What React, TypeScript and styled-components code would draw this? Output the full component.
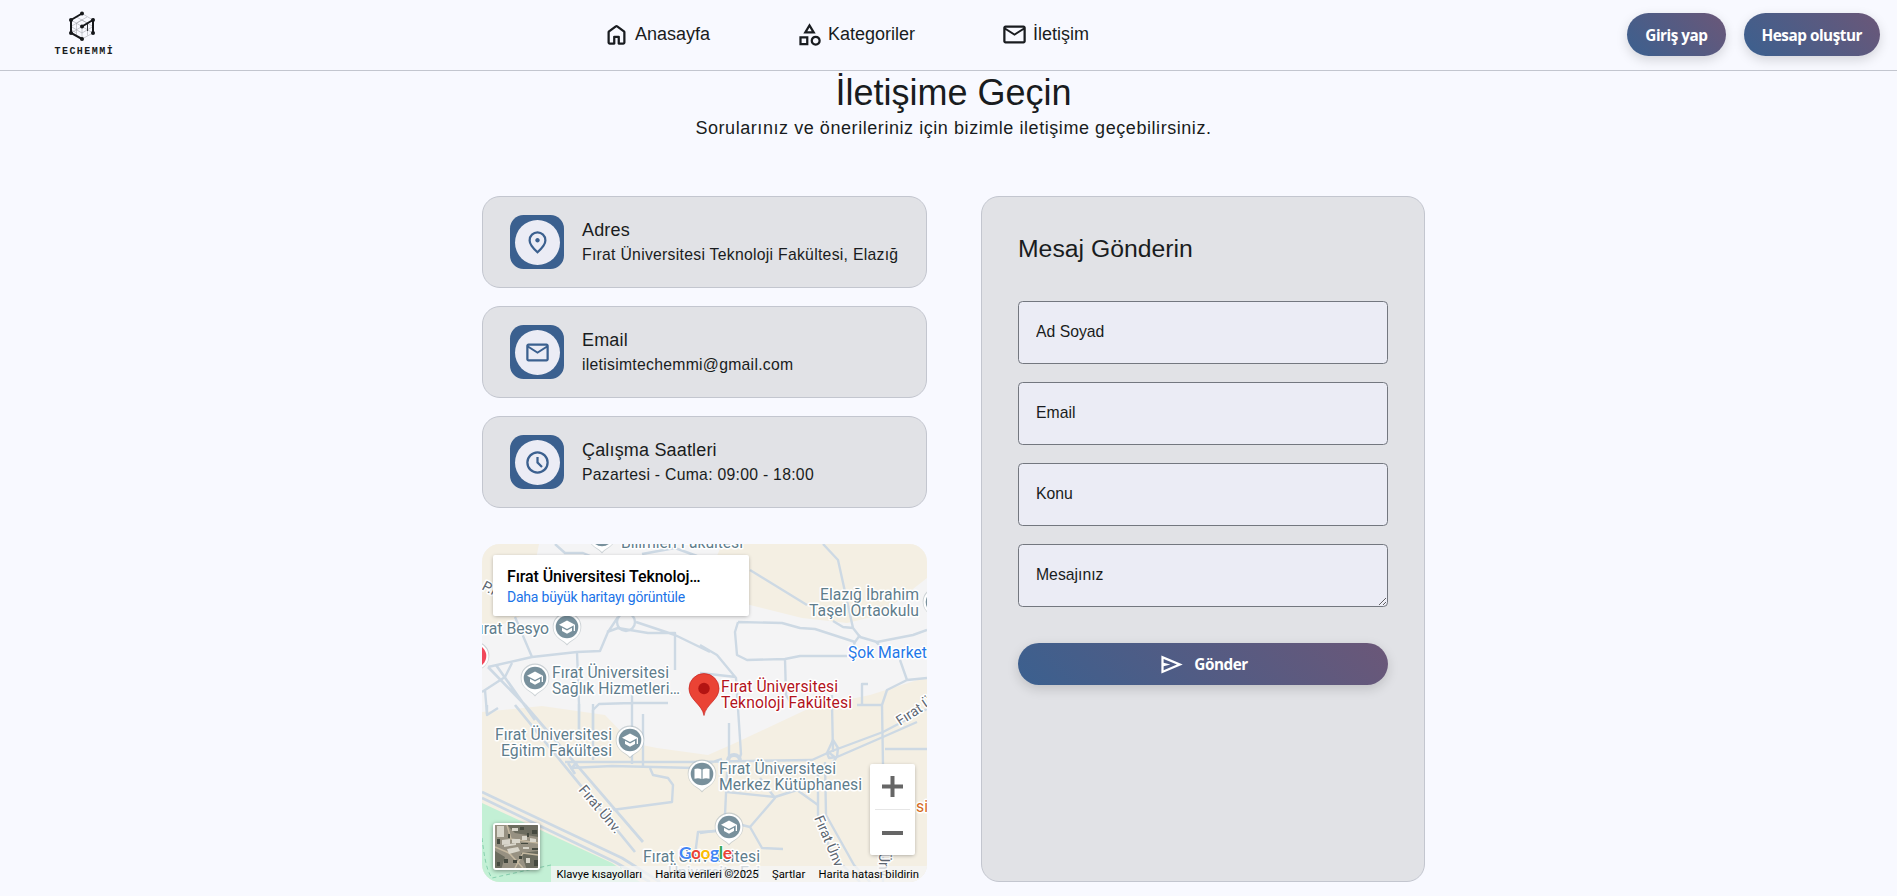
import React from 'react';
import styled, { createGlobalStyle } from 'styled-components';

const color = {
  primary: '#3b608f',
  tertiary: '#6b5778',
  surface: '#f8f9ff',
  card: '#e1e2e6',
  field: '#ebecf5',
  outline: '#73777f',
  outlineVariant: '#c3c6cf',
  text: '#191c20',
};

const GlobalStyle = createGlobalStyle`
  *, *::before, *::after { box-sizing: border-box; }
  html, body { margin: 0; background: ${color.surface}; overflow: hidden; }
  body {
    color: ${color.text};
    font-family: Arial, "Liberation Sans", sans-serif;
    font-size: 18px;
  }
`;

/* ---------- icons ---------- */

const paths = {
  home: 'M240-200h120v-200q0-17 11.5-28.5T400-440h160q17 0 28.5 11.5T600-400v200h120v-360L480-740 240-560v360Zm-80 0v-360q0-19 8.5-36t23.5-28l240-180q21-16 48-16t48 16l240 180q15 11 23.5 28t8.5 36v360q0 33-23.5 56.5T720-120H560q-17 0-28.5-11.5T520-160v-200h-80v200q0 17-11.5 28.5T400-120H240q-33 0-56.5-23.5T160-200Z',
  category: 'm260-520 220-360 220 360H260ZM700-80q-75 0-127.5-52.5T520-260q0-75 52.5-127.5T700-440q75 0 127.5 52.5T880-260q0 75-52.5 127.5T700-80Zm-580-20v-320h320v320H120Zm580-60q42 0 71-29t29-71q0-42-29-71t-71-29q-42 0-71 29t-29 71q0 42 29 71t71 29Zm-500-20h160v-160H200v160Zm202-420h156l-78-126-78 126Z',
  mail: 'M160-160q-33 0-56.5-23.5T80-240v-480q0-33 23.5-56.5T160-800h640q33 0 56.5 23.5T880-720v480q0 33-23.5 56.5T800-160H160Zm320-280L160-640v400h640v-400L480-440Zm0-80 320-200H160l320 200Z',
  location: 'M480-480q33 0 56.5-23.5T560-560q0-33-23.5-56.5T480-640q-33 0-56.5 23.5T400-560q0 33 23.5 56.5T480-480Zm0 294q122-112 181-203.5T720-552q0-109-69.5-178.5T480-800q-101 0-170.5 69.5T240-552q0 71 59 162.5T480-186Zm0 106Q319-217 239.5-334.5T160-552q0-150 96.5-239T480-880q127 0 223.5 89T800-552q0 100-79.5 217.5T480-80Z',
  schedule: 'm612-292 56-56-148-148v-184h-80v216l172 172ZM480-80q-83 0-156-31.5T197-197q-54-54-85.5-127T80-480q0-83 31.5-156T197-763q54-54 127-85.5T480-880q83 0 156 31.5T763-763q54 54 85.5 127T880-480q0 83-31.5 156T763-197q-54 54-127 85.5T480-80Zm0-80q133 0 226.5-93.5T800-480q0-133-93.5-226.5T480-800q-133 0-226.5 93.5T160-480q0 133 93.5 226.5T480-160Z',
  send: 'M120-160v-640l760 320-760 320Zm80-120 474-200-474-200v140l240 60-240 60v140Z',
};

const IconSvg = styled.svg`
  width: 27px;
  height: 27px;
  flex: none;
  display: block;
  fill: currentColor;
`;

const Icon = ({ name }: { name: keyof typeof paths }) => (
  <IconSvg viewBox="0 -960 960 960" aria-hidden="true">
    <path d={paths[name]} />
  </IconSvg>
);

/* ---------- header ---------- */

const Header = styled.header`
  height: 71px;
  display: grid;
  grid-template-columns: 603px 1fr auto;
  align-items: center;
  padding: 0 17px 1px 0;
  border-bottom: 1px solid ${color.outlineVariant};
`;

const Brand = styled.a`
  display: flex;
  flex-direction: column;
  align-items: flex-start;
  gap: 5px;
  width: 62px;
  margin-left: 54.5px;
`;

const BrandMark = styled.svg`
  width: 30px;
  height: 30px;
  margin-left: 12.5px;
  display: block;
`;

const BrandName = styled.span`
  font: bold 10px/12px "Liberation Mono", monospace;
  letter-spacing: 1.45px;
  white-space: nowrap;
`;

const Nav = styled.nav`
  display: flex;
  gap: 86px;
`;

const NavLink = styled.a`
  display: flex;
  align-items: center;
  gap: 5px;
  line-height: 27px;

  span { margin-top: -1px; }
`;

const Actions = styled.div`
  display: flex;
  gap: 18px;
`;

const Button = styled.button<{ $wide?: boolean }>`
  display: flex;
  align-items: center;
  justify-content: center;
  gap: 9px;
  width: ${(p) => (p.$wide ? '100%' : 'auto')};
  height: ${(p) => (p.$wide ? 42 : 43)}px;
  padding: 0 18px;
  border: 0;
  border-radius: 22px;
  color: #fff;
  background: linear-gradient(45deg, ${color.primary}, ${color.tertiary});
  box-shadow: 0 4px 12px rgba(0, 0, 0, 0.15);
  font: 700 15.3px/22px "Open Sans", "Noto Sans", sans-serif;
  letter-spacing: -0.48px;
  white-space: nowrap;
`;

function Logo() {
  const nodes = [[15, 2.5], [4, 9], [4, 22], [15, 28], [26, 22], [26, 9], [15, 15.5]];
  return (
    <Brand>
      <BrandMark viewBox="0 0 30 30">
        <g stroke="#9a9ca3" strokeWidth="0.5" fill="none">
          <path d="M15 2.5 26 9M4 9l11 6.5v12.5M4 22l11-6.5 11 6.5-11 6M4 15.5 15 9l11 6.5M9.5 6 21 12.5M9.5 12v12.5M20.5 12v12.5M4 15.5l11 6.5 11-6.5M9.500 12 20 6M4 18.500 9.500 22" />
        </g>
        <path d="M15 2.500 4 9V22L15 28M26 22V9L15 15.500" stroke="#15171a" strokeWidth="2" fill="none" />
        <path d="M20.500 13v7" stroke="#33353a" strokeWidth="1" />
        {nodes.map(([x, y]) => (
          <circle key={`${x}-${y}`} cx={x} cy={y} r="2" fill="#15171a" />
        ))}
      </BrandMark>
      <BrandName>TECHEMMİ</BrandName>
    </Brand>
  );
}

/* ---------- page ---------- */

const Main = styled.main`
  width: 943px;
  margin-left: 482px;
`;

const Title = styled.h1`
  margin: 0;
  font-weight: 400;
  font-size: 36px;
  line-height: 44px;
  text-align: center;
`;

const Lead = styled.p`
  margin: 0 0 54px;
  font-size: 18px;
  line-height: 27px;
  letter-spacing: 0.56px;
  text-align: center;
`;

const Columns = styled.div`
  display: grid;
  grid-template-columns: 1fr 1fr;
  gap: 54px;
  height: 686px;
`;

const Info = styled.section`
  display: flex;
  flex-direction: column;
  gap: 18px;
`;

const InfoCard = styled.article`
  display: flex;
  align-items: center;
  gap: 18px;
  height: 92px;
  padding: 0 27px;
  background: ${color.card};
  border: 1px solid ${color.outlineVariant};
  border-radius: 18px;
`;

const IconTile = styled.div`
  flex: none;
  width: 54px;
  height: 54px;
  padding: 4.5px;
  border-radius: 13.5px;
  background: ${color.primary};
`;

const IconDisc = styled.div`
  display: grid;
  place-items: center;
  width: 45px;
  height: 45px;
  border-radius: 50%;
  color: ${color.primary};
  background: ${color.field};
`;

const InfoText = styled.div`
  white-space: nowrap;
`;

const InfoTitle = styled.h2`
  margin: 0;
  font-weight: 400;
  font-size: 18px;
  line-height: 27px;
  letter-spacing: 0.17px;
`;

const InfoLine = styled.p`
  margin: 0;
  font-size: 15.75px;
  line-height: 22.5px;
  letter-spacing: 0.28px;
`;

const FormCard = styled.form`
  padding: 36px;
  background: ${color.card};
  border: 1px solid ${color.outlineVariant};
  border-radius: 18px;
`;

const FormTitle = styled.h2`
  margin: 0 0 36px;
  font-weight: 400;
  font-size: 24.75px;
  line-height: 32px;
`;

const Fields = styled.div`
  display: grid;
  gap: 18px;
  margin-bottom: 36px;
`;

const fieldStyle = `
  display: block;
  width: 100%;
  height: 63px;
  margin: 0;
  border: 1px solid ${color.outline};
  border-radius: 4.5px;
  background: ${color.field};
  outline: 0;
  font: 15.75px/18px Arial, "Liberation Sans", sans-serif;
  &::placeholder { color: ${color.text}; opacity: 1; }
`;

const Input = styled.input`
  ${fieldStyle}
  padding: 0 17px 1px;
`;

const TextArea = styled.textarea`
  ${fieldStyle}
  padding: 21px 17px;
  resize: vertical;
  overflow: hidden;
`;

/* ---------- map ---------- */

const MapFrame = styled.div`
  position: relative;
  height: 338px;
  margin-top: 18px;
  overflow: hidden;
  border-radius: 18px;
  background: #f4f4f5;
  font-family: Roboto, sans-serif;
`;

const MapSvg = styled.svg`
  display: block;
  width: 445px;
  height: 338px;
  font-family: Roboto, sans-serif;
`;

const PlaceCard = styled.div`
  position: absolute;
  top: 11px;
  left: 11px;
  width: 256px;
  height: 61px;
  padding: 10px 14px;
  border-radius: 2px;
  background: #fff;
  box-shadow: 0 1px 4px -1px rgba(0, 0, 0, 0.4);
  white-space: nowrap;
`;

const PlaceName = styled.div`
  color: #000;
  font-weight: 500;
  font-size: 16px;
  line-height: 23px;
  letter-spacing: -0.1px;
`;

const PlaceLink = styled.a`
  display: block;
  color: #1a73e8;
  font-size: 14px;
  line-height: 18px;
  letter-spacing: -0.22px;
`;

const ZoomBox = styled.div`
  position: absolute;
  top: 220px;
  left: 388px;
  width: 45px;
  height: 91px;
  padding: 0 5px;
  background: #fff;
  border-radius: 2px;
  box-shadow: 0 1px 4px -1px rgba(0, 0, 0, 0.4);
`;

const ZoomKey = styled.div`
  display: grid;
  place-items: center;
  height: 45px;
  & + & { border-top: 1px solid #e6e6e6; height: 46px; }
`;

const Thumb = styled.div`
  position: absolute;
  top: 279px;
  left: 11px;
  width: 47px;
  height: 47px;
  border: 2px solid #fff;
  border-radius: 3px;
  overflow: hidden;
  background: #77756a;
  box-shadow: 0 1px 4px rgba(0, 0, 0, 0.4);

  svg { display: block; }
`;

const Credits = styled.div`
  position: absolute;
  right: 0;
  bottom: 0;
  display: flex;
  width: 376px;
  height: 16px;
  padding: 0 8px 0 5.5px;
  justify-content: space-between;
  background: rgba(245, 245, 245, 0.75);
  color: #000;
  font-size: 11.25px;
  line-height: 17px;
  white-space: nowrap;
`;

type LabelProps = {
  x: number;
  y: number;
  w?: number;
  end?: boolean;
  rotate?: number;
  fill?: string;
  size?: number;
  children: string;
};

const Label = ({ x, y, w, end, rotate, fill = '#5f7d8c', size = 15.75, children }: LabelProps) => (
  <text
    x={x}
    y={y}
    fontSize={size}
    fill={fill}
    stroke="#fff"
    strokeWidth="3"
    strokeLinejoin="round"
    paintOrder="stroke"
    textAnchor={end ? 'end' : 'start'}
    textLength={w}
    transform={rotate ? `rotate(${rotate} ${x} ${y})` : undefined}
  >
    {children}
  </text>
);

const Marker = ({ x, y, kind = 'school' }: { x: number; y: number; kind?: 'school' | 'book' | 'red' | 'plain' }) => (
  <g transform={`translate(${x} ${y})`}>
    <path d="M0 18.500C-2.500 15-7.500 13-10.500 9.500A14.300 14.300 0 1 1 10.500 9.500C7.500 13 2.500 15 0 18.500Z" fill="#aab4ba" opacity="0.55" />
    <path d="M0 17C-2.500 14-7 12.500-10 9.200A13.500 13.500 0 1 1 10 9.200C7 12.500 2.500 14 0 17Z" fill="#fff" />
    <circle r="11.300" fill={kind === 'red' ? '#f1485b' : '#78909c'} />
    {kind === 'school' && (
      <g fill="#fff">
        <path d="M0-6.500-8-2.200 0 2 8-2.200Z" />
        <path d="M-5 .8V4L0 6.800 5 4V.8L0 3.500Z" />
        <path d="M6.700-2h1.300v6H6.700Z" />
      </g>
    )}
    {kind === 'book' && <path d="M-7.500-5C-5-6-2.500-5.500-.6-4.500V5C-2.500 4-5 4-7.500 4.800ZM7.500-5C5-6 2.500-5.500.6-4.500V5C2.500 4 5 4 7.500 4.800Z" fill="#fff" />}
  </g>
);

const roads = [
  'M73 0 83 9H101L113 14M160 10 193 4 215 12',
  'M33 73 50 113M6 123 50 113 95 108 118 107 126 88 136 73M95 108 97 160V186',
  'M125 88 136 84 166 89H193V126M154 78 193 91 228 108',
  'M30 119 23 133 3 146 0 148M3 146 5 170M111 186V166L117 160 150 159H186M150 151V220',
  'M5 161V171L16 164M111 160V216M161 170V223M97 160V186',
  'M83 218H208L330 216 350 207 401 188 445 165M88 224 130 222 213 224 240 215',
  'M168 224 171 231 186 234 191 241 190 258 130 266',
  'M341 0 356 16 371 84 378 93 395 98 431 91 445 86M268 26 325 61M351 77 361 83 371 84',
  'M256 78 300 79 318 84 333 85 373 98 378 91M256 78 253 88 255 111 265 116 303 115 318 112 365 112M303 115 304 151 310 161',
  'M218 101 235 111 254 134 259 210 257 216M218 129 254 133M247 179V216M373 98 370 105M394 98 400 104',
  'M418 116 425 136 445 134M425 136 405 146 400 161 401 221M400 161H375M380 160V140H386M350 151V161L351 208',
  'M346 208 354 214 350 220M351 196 345 209 347 214 355 213 356 204ZM355 213 401 193 435 178M403 205H445',
  'M336 220V271L350 311 378 338M343 218 344 271 372 321 388 338M401 221V338',
  'M245 228 243 271M218 289 238 286M260 281 268 283 280 304 301 305M268 283 293 254 278 234',
  'M245 248 293 253 315 246 336 261M237 287 216 288 213 311',
];

const sidewalks = ['M33 161 153 308M43 161 161 298', 'M6 123 43 161M14 121 53 176', 'M0 248 140 314 178 338M0 254 133 318 168 338', 'M86 219 93 230M95 218 89 225'];

function CampusMap() {
  return (
    <MapFrame>
      <MapSvg viewBox="0 0 445 338">
        <rect width="445" height="338" fill="#f4f4f5" />
        <g fill="#f4efe3">
          <path d="M0 0H57L43 70 0 90ZM240 0H445V34L398 71 365 79 320 74 268 61 218 52Z" />
          <path d="M0 168 60 162 123 171 150 199 175 204 226 211 251 200 330 163 388 151 445 133V338H0Z" />
        </g>
        <path d="M0 259 130 319 158 338H0Z" fill="#c3f0d5" />
        <path d="M0 294C2 310 4 326 10 334L69 321M138 321l3 9" fill="none" stroke="#86cfae" strokeWidth="1" strokeDasharray="4 3" />
        <g fill="none" stroke="#cdd9e4" strokeLinejoin="round">
          {roads.map((d) => <path key={d} d={d} strokeWidth="2.400" />)}
          {sidewalks.map((d) => <path key={d} d={d} strokeWidth="2.700" />)}
          <circle cx="144" cy="78" r="9" strokeWidth="2.400" />
          <path d="M246 217a6 6 0 0 1 12 0" strokeWidth="4" />
        </g>

        <Label x={139} y={4} w={122}>Bilimleri Fakültesi</Label>
        <Label x={67} y={90} end>Fırat Besyo</Label>
        <Label x={70} y={134} w={117}>Fırat Üniversitesi</Label>
        <Label x={70} y={150} w={128}>Sağlık Hizmetleri…</Label>
        <Label x={437} y={56} w={99} end>Elazığ İbrahim</Label>
        <Label x={437} y={72} w={110} end>Taşel Ortaokulu</Label>
        <Label x={366} y={114} w={79} fill="#1f78e8">Şok Market</Label>
        <Label x={130} y={196} w={117} end>Fırat Üniversitesi</Label>
        <Label x={130} y={212} w={111} end>Eğitim Fakültesi</Label>
        <Label x={237} y={230} w={117}>Fırat Üniversitesi</Label>
        <Label x={237} y={246} w={143}>Merkez Kütüphanesi</Label>
        <Label x={161} y={318} w={117}>Fırat Üniversitesi</Label>
        <Label x={186} y={334} w={92}>Üniversite Evi</Label>
        <Label x={-1} y={45} rotate={28} size={14} fill="#5d6670">P.k.</Label>
        <Label x={96} y={246} w={58} rotate={50} size={14} fill="#5d6670">Fırat Ünv.</Label>
        <Label x={332} y={274} w={54} rotate={67} size={14} fill="#5d6670">Fırat Ünv</Label>
        <Label x={418} y={182} rotate={-33} size={14} fill="#5d6670">Fırat Ünv.</Label>
        <Label x={397} y={309} rotate={90} size={14} fill="#5d6670">Ünv.</Label>
        <Label x={434} y={268} fill="#d56a1c">si</Label>

        <Marker x={120} y={-9} kind="plain" />
        <Marker x={85} y={83} />
        <Marker x={53} y={134} />
        <Marker x={148} y={196} />
        <Marker x={220} y={230} kind="book" />
        <Marker x={247} y={283} />
        <Marker x={-7} y={112} kind="red" />
        <Marker x={455} y={58} kind="plain" />

        <path d="M222 171.500C220 160 207 156 207 144.500A15 15 0 0 1 237 144.500C237 156 224 160 222 171.500Z" fill="#ea4335" stroke="#c5221f" strokeWidth="0.700" />
        <circle cx="222" cy="144.500" r="5.700" fill="#b31412" />
        <Label x={239} y={148} w={117} fill="#b3141d">Fırat Üniversitesi</Label>
        <Label x={239} y={164} w={131} fill="#b3141d">Teknoloji Fakültesi</Label>

        <text x="197" y="315" fontFamily="Lato, sans-serif" fontSize="17.500" fontWeight="700" textLength="53" stroke="#fff" strokeWidth="2" paintOrder="stroke">
          <tspan fill="#4285f4">G</tspan>
          <tspan fill="#ea4335">o</tspan>
          <tspan fill="#fbbc04">o</tspan>
          <tspan fill="#4285f4">g</tspan>
          <tspan fill="#34a853">l</tspan>
          <tspan fill="#ea4335">e</tspan>
        </text>
      </MapSvg>

      <PlaceCard>
        <PlaceName>Fırat Üniversitesi Teknoloj…</PlaceName>
        <PlaceLink>Daha büyük haritayı görüntüle</PlaceLink>
      </PlaceCard>

      <ZoomBox>
        <ZoomKey>
          <svg width="21" height="21" viewBox="0 0 21 21"><path d="M8.500 0h4v8.500H21v4h-8.500V21h-4v-8.500H0v-4h8.500Z" fill="#666" /></svg>
        </ZoomKey>
        <ZoomKey>
          <svg width="21" height="4" viewBox="0 0 21 4"><path d="M0 0h21v4H0Z" fill="#666" /></svg>
        </ZoomKey>
      </ZoomBox>

      <Thumb>
        <svg width="43" height="43" viewBox="0 0 43 43">
          <rect width="43" height="43" fill="#979182" />
          <path d="M12 0h31v12L20 8ZM26 28l17-2v19H32ZM0 26l10 6-4 13H0Z" fill="#6c6c5f" />
          <g fill="none" stroke="#c4b8a0" strokeWidth="1.500">
            <path d="M0 22 14 28 28 43M12 0 16 14 43 18M20 43 28 28 43 30" />
          </g>
          <g fill="#d8d5ca">
            <path d="M2 1h7v11H2ZM7 15l8-1v5l-8 1ZM17 14h8v4h-8ZM27 11h5v4h-5ZM12 24l11-2 2 4-11 3ZM35 13l6 1v3h-6ZM31 33h4v5h-4ZM17 3h6v3h-6ZM28 22h6v2h-6ZM9 20l12-2v2L9 22Z" />
          </g>
          <g fill="#45493f">
            <path d="M25 2h4v3h-4ZM37 5h5v4h-5ZM37 23h6v2h-6ZM9 34h4v4H9ZM39 35h4v6h-4ZM26 18h7v1h-7ZM2 14h3v5H2ZM18 35h4v3h-4ZM13 9h2v4h-2ZM32 8h2v4h-2ZM24 31h3v3h-3ZM2 37h3v4H2Z" />
          </g>
        </svg>
      </Thumb>

      <Credits>
        <span>Klavye kısayolları</span>
        <span>Harita verileri ©2025</span>
        <span>Şartlar</span>
        <span>Harita hatası bildirin</span>
      </Credits>
    </MapFrame>
  );
}

const contacts: { icon: keyof typeof paths; title: string; line: string }[] = [
  { icon: 'location', title: 'Adres', line: 'Fırat Üniversitesi Teknoloji Fakültesi, Elazığ' },
  { icon: 'mail', title: 'Email', line: 'iletisimtechemmi@gmail.com' },
  { icon: 'schedule', title: 'Çalışma Saatleri', line: 'Pazartesi - Cuma: 09:00 - 18:00' },
];

export default function App() {
  return (
    <>
      <GlobalStyle />
      <Header>
        <Logo />
        <Nav>
          <NavLink><Icon name="home" /><span>Anasayfa</span></NavLink>
          <NavLink><Icon name="category" /><span>Kategoriler</span></NavLink>
          <NavLink><Icon name="mail" /><span>İletişim</span></NavLink>
        </Nav>
        <Actions>
          <Button>Giriş yap</Button>
          <Button>Hesap oluştur</Button>
        </Actions>
      </Header>
      <Main>
        <Title>İletişime Geçin</Title>
        <Lead>Sorularınız ve önerileriniz için bizimle iletişime geçebilirsiniz.</Lead>
        <Columns>
          <Info>
            {contacts.map((c) => (
              <InfoCard key={c.title}>
                <IconTile>
                  <IconDisc><Icon name={c.icon} /></IconDisc>
                </IconTile>
                <InfoText>
                  <InfoTitle>{c.title}</InfoTitle>
                  <InfoLine>{c.line}</InfoLine>
                </InfoText>
              </InfoCard>
            ))}
            <CampusMap />
          </Info>
          <FormCard>
            <FormTitle>Mesaj Gönderin</FormTitle>
            <Fields>
              <Input placeholder="Ad Soyad" />
              <Input placeholder="Email" />
              <Input placeholder="Konu" />
              <TextArea placeholder="Mesajınız" />
            </Fields>
            <Button type="button" $wide><Icon name="send" />Gönder</Button>
          </FormCard>
        </Columns>
      </Main>
    </>
  );
}
